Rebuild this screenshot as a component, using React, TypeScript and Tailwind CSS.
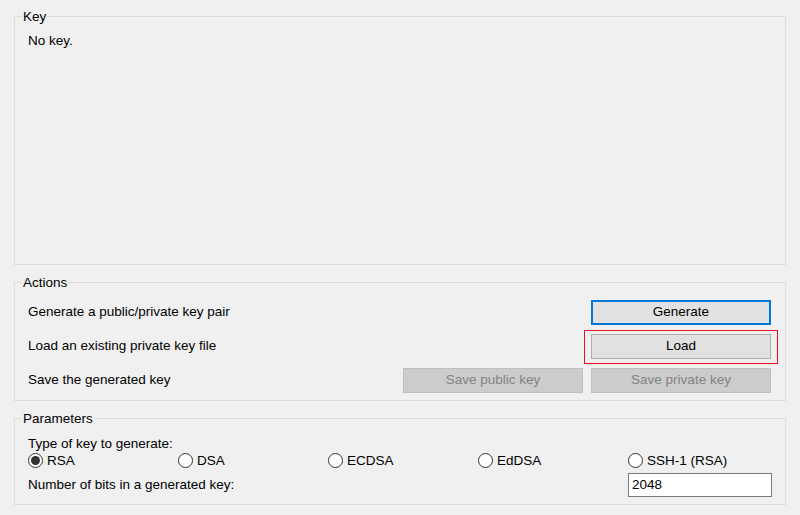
import React from 'react';

function Group({ label, className, children }: { label: string; className?: string; children: React.ReactNode }) {
  return (
    <div className={`relative border border-[#dcdcdc] ${className ?? ''}`}>
      {/* legend sits over the top border */}
      <span className="absolute -top-[8px] left-[7px] bg-[#f0f0f0] px-[1px] leading-[15px]">{label}</span>
      {children}
    </div>
  );
}

function Btn({ children, disabled, focused }: { children: React.ReactNode; disabled?: boolean; focused?: boolean }) {
  const base = 'w-[180px] h-[25px] flex items-center justify-center';
  if (disabled) return <div className={`${base} bg-[#cccccc] border border-[#bfbfbf] text-[#838383]`}>{children}</div>;
  if (focused) return <div className={`${base} bg-[#e1e1e1] border-2 border-[#0078d7]`}>{children}</div>;
  return <div className={`${base} bg-[#e1e1e1] border border-[#adadad]`}>{children}</div>;
}

function Radio({ label, checked }: { label: string; checked?: boolean }) {
  return (
    <div className="flex items-center gap-[4px]">
      <span className="w-[15px] h-[15px] rounded-full border border-[#333333] bg-white flex items-center justify-center">
        {checked && <span className="w-[9px] h-[9px] rounded-full bg-[#333333]" />}
      </span>
      <span>{label}</span>
    </div>
  );
}

export default function App() {
  return (
    <div
      className="w-[800px] h-[515px] bg-[#f0f0f0] text-black text-[13.5px] px-[14px] pt-[16px] flex flex-col gap-[17px] select-none"
      style={{ fontFamily: "'Liberation Sans', Arial, sans-serif" }}
    >
      {/* ── Key ── */}
      <Group label="Key" className="h-[249px] pl-[13px] pt-[16px]">
        <div className="leading-[15px]">No key.</div>
      </Group>

      {/* ── Actions ── */}
      <Group label="Actions" className="h-[119px] pl-[13px] pr-[14px] pt-[17px] flex flex-col gap-[9px]">
        <div className="flex items-center justify-between">
          <span>Generate a public/private key pair</span>
          <Btn focused>Generate</Btn>
        </div>
        <div className="flex items-center justify-between">
          <span>Load an existing private key file</span>
          <div className="relative">
            <Btn>Load</Btn>
            <div className="absolute -left-[7px] -right-[7px] -top-[4px] -bottom-[5px] border border-[#e81123]" />
          </div>
        </div>
        <div className="flex items-center">
          <span className="flex-1">Save the generated key</span>
          <div className="flex gap-[8px]">
            <Btn disabled>Save public key</Btn>
            <Btn disabled>Save private key</Btn>
          </div>
        </div>
      </Group>

      {/* ── Parameters ── */}
      <Group label="Parameters" className="h-[87px] pl-[13px] pr-[13px] pt-[17px]">
        <div className="leading-[15px]">Type of key to generate:</div>
        <div className="grid grid-cols-[150px_150px_150px_150px_144px] leading-[15px] mt-[2px]">
          <Radio label="RSA" checked />
          <Radio label="DSA" />
          <Radio label="ECDSA" />
          <Radio label="EdDSA" />
          <Radio label="SSH-1 (RSA)" />
        </div>
        <div className="flex items-center justify-between mt-[5px]">
          <span>Number of bits in a generated key:</span>
          <div className="w-[144px] h-[24px] bg-white border border-[#7a7a7a] pl-[3px] flex items-center">2048</div>
        </div>
      </Group>
    </div>
  );
}
